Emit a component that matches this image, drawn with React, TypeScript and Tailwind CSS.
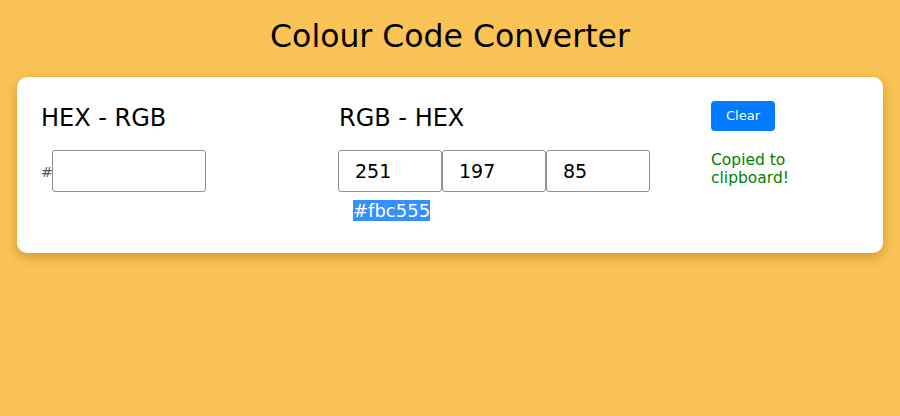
export default function App() {
  return (
    <div className="h-[416px] bg-[#f9c455] pt-[16px] font-['DejaVu_Sans',sans-serif] text-black">
      <h1 className="text-center text-[31.5px] leading-[40px] font-normal">Colour Code Converter</h1>

      <div className="mx-[17px] mt-[21px] h-[176px] rounded-[10px] bg-white px-[24px] pt-[26px] shadow-[0_4px_12px_rgba(150,100,0,0.45)]">
        <div className="flex">
          {/* hex -> rgb */}
          <div className="w-[297px]">
            <h2 className="text-[24px] leading-[30px]">HEX - RGB</h2>
            <div className="mt-[17px] flex items-center">
              <span className="w-[11px] pt-[3px] text-[14px] text-[#555]">#</span>
              <input
                type="text"
                className="h-[42px] w-[154px] rounded-[3px] border border-[#8f8f8f] bg-white px-[16px] text-[19px] outline-none"
              />
            </div>
          </div>

          {/* rgb -> hex */}
          <div className="w-[373px]">
            <h2 className="pl-[1px] text-[24px] leading-[30px]">RGB - HEX</h2>
            <div className="mt-[17px] flex">
              {['251', '197', '85'].map((v) => (
                <input
                  key={v}
                  type="text"
                  defaultValue={v}
                  className="h-[42px] w-[104px] rounded-[3px] border border-[#8f8f8f] bg-white px-[16px] text-[19px] outline-none"
                />
              ))}
            </div>
            <div className="mt-[7px] pl-[15px]">
              <span className="bg-[#3390ff] text-[18px] leading-[23px] text-white">#fbc555</span>
            </div>
          </div>

          {/* actions */}
          <div>
            <button className="-mt-[2px] h-[30px] w-[64px] rounded-[4px] bg-[#007bff] text-[13px] text-white">
              Clear
            </button>
            <p className="mt-[20px] w-[110px] text-[15.5px] leading-[18px] text-[#008000]">Copied to clipboard!</p>
          </div>
        </div>
      </div>
    </div>
  )
}
